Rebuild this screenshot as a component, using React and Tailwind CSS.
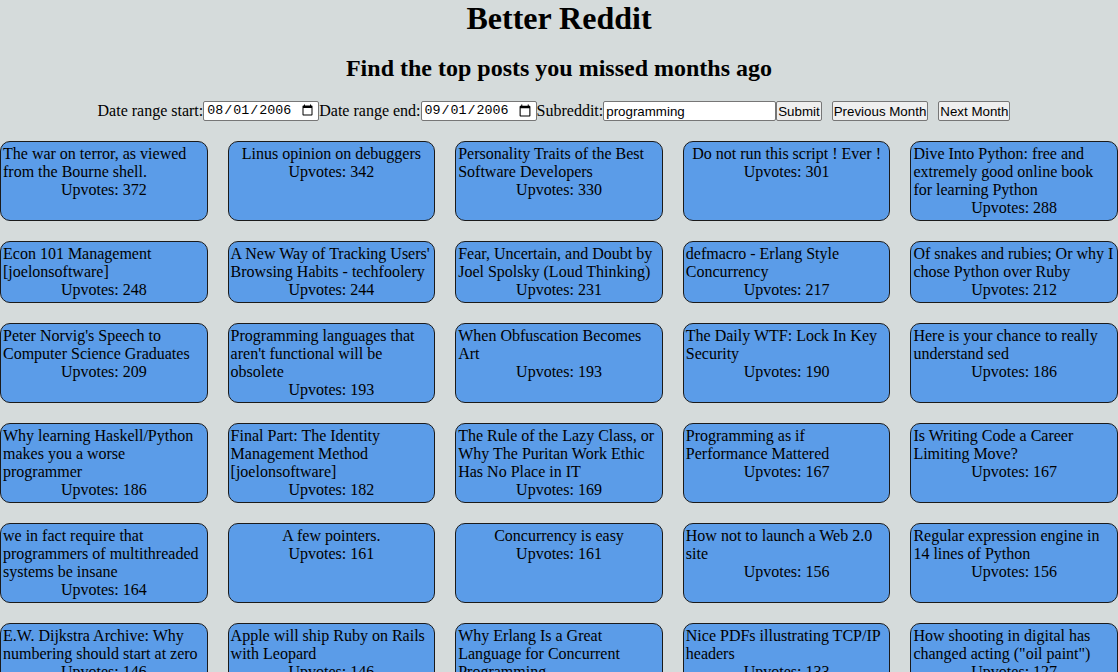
import React from "react";

const posts = [
  ["The war on terror, as viewed from the Bourne shell.", 372],
  ["Linus opinion on debuggers", 342],
  ["Personality Traits of the Best Software Developers", 330],
  ["Do not run this script ! Ever !", 301],
  ["Dive Into Python: free and extremely good online book for learning Python", 288],
  ["Econ 101 Management [joelonsoftware]", 248],
  ["A New Way of Tracking Users' Browsing Habits - techfoolery", 244],
  ["Fear, Uncertain, and Doubt by Joel Spolsky (Loud Thinking)", 231],
  ["defmacro - Erlang Style Concurrency", 217],
  ["Of snakes and rubies; Or why I chose Python over Ruby", 212],
  ["Peter Norvig's Speech to Computer Science Graduates", 209],
  ["Programming languages that aren't functional will be obsolete", 193],
  ["When Obfuscation Becomes Art", 193],
  ["The Daily WTF: Lock In Key Security", 190],
  ["Here is your chance to really understand sed", 186],
  ["Why learning Haskell/Python makes you a worse programmer", 186],
  ["Final Part: The Identity Management Method [joelonsoftware]", 182],
  ["The Rule of the Lazy Class, or Why The Puritan Work Ethic Has No Place in IT", 169],
  ["Programming as if Performance Mattered", 167],
  ["Is Writing Code a Career Limiting Move?", 167],
  ["we in fact require that programmers of multithreaded systems be insane", 164],
  ["A few pointers.", 161],
  ["Concurrency is easy", 161],
  ["How not to launch a Web 2.0 site", 156],
  ["Regular expression engine in 14 lines of Python", 156],
  ["E.W. Dijkstra Archive: Why numbering should start at zero", 146],
  ["Apple will ship Ruby on Rails with Leopard", 146],
  ["Why Erlang Is a Great Language for Concurrent Programming", 139],
  ["Nice PDFs illustrating TCP/IP headers", 133],
  ["How shooting in digital has changed acting (\"oil paint\")", 127],
];

const serif = "font-['Liberation_Serif','Times_New_Roman',serif]";
const ctrl = "font-['Liberation_Sans',Arial,sans-serif] text-[13.33px] text-black";
const btn = `h-[20px] px-[1px] bg-[#efefef] border border-[#767676] rounded-[2px] ${ctrl}`;
const dateInput =
  "w-[116px] h-[20px] bg-white border border-[#767676] rounded-[2px] px-[2px] font-['Liberation_Mono',monospace] text-[13.33px]";

function PostCard({ title, votes }) {
  return (
    <div className="flex flex-col items-center bg-[#5b9ce8] border border-[#1a1a1a] rounded-[10px] px-[2px] py-[3px] leading-[18px]">
      <div>{title}</div>
      <div>Upvotes: {votes}</div>
    </div>
  );
}

export default function App() {
  return (
    <div className={`min-h-screen bg-[#d5dbdb] text-black text-[16px] ${serif}`}>
      <h1 className="text-center text-[32px] font-bold leading-[37px]">Better Reddit</h1>
      <h2 className="text-center text-[24px] font-bold leading-[28px] mt-[17px]">
        Find the top posts you missed months ago
      </h2>
      <form
        className="flex items-center justify-center mt-[17px]"
        onSubmit={(e) => e.preventDefault()}
      >
        <label>Date range start:</label>
        <input type="date" defaultValue="2006-08-01" className={dateInput} />
        <label>Date range end:</label>
        <input type="date" defaultValue="2006-09-01" className={dateInput} />
        <label>Subreddit:</label>
        <input
          type="text"
          defaultValue="programming"
          className={`w-[173px] h-[20px] bg-white border border-[#767676] rounded-[2px] px-[2px] ${ctrl}`}
        />
        <button type="submit" className={btn}>
          Submit
        </button>
        <button type="button" className={`ml-[10px] ${btn}`}>
          Previous Month
        </button>
        <button type="button" className={`ml-[10px] mr-[10px] ${btn}`}>
          Next Month
        </button>
      </form>
      <div className="grid grid-cols-5 gap-x-[20px] gap-y-[20px] mt-[18px] pb-[20px]">
        {posts.map(([title, votes]) => (
          <PostCard key={title} title={title} votes={votes} />
        ))}
      </div>
    </div>
  );
}
